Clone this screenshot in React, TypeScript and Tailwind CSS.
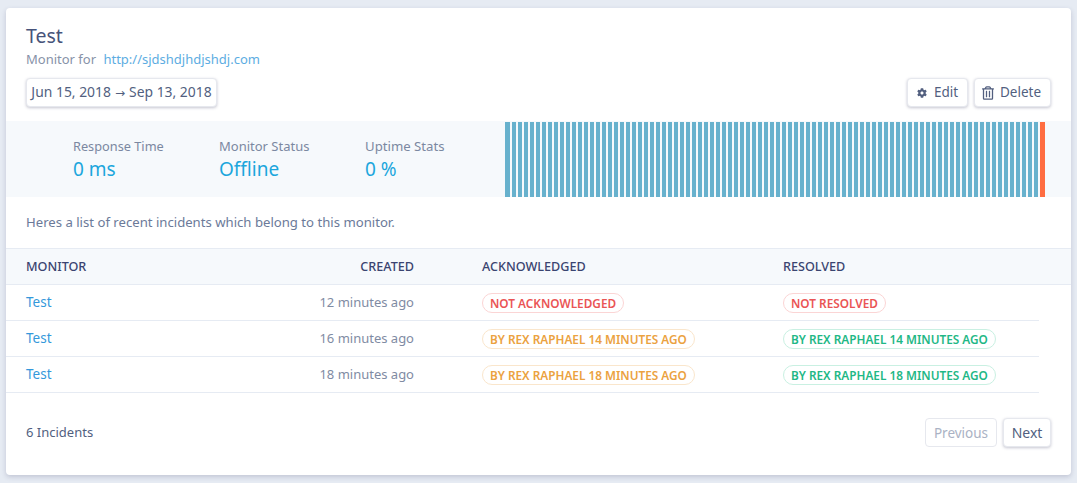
import React from "react";
import { FaCog, FaRegTrashAlt } from "react-icons/fa";

const btn = "inline-flex items-center justify-center h-[29px] rounded-[4px] bg-white border border-[#e6e8ee] shadow-[0_1px_3px_rgba(50,50,93,0.28)] text-[13.5px] text-[#525f7f]";
const red = "text-[#ea5455] border-[#fbd5d5]";
const amber = "text-[#eba23f] border-[#fae6cc]";
const green = "text-[#1fb886] border-[#c9f0e2]";

function Pill({ tone, children }: { tone: string; children: React.ReactNode }) {
  return (
    <span className={`inline-flex items-center h-[20px] px-[7px] rounded-full border text-[11.8px] font-semibold uppercase whitespace-nowrap ${tone}`}>
      {children}
    </span>
  );
}

const rows = [
  { created: "12 minutes ago", ack: "Not acknowledged", ackTone: red, res: "Not resolved", resTone: red },
  { created: "16 minutes ago", ack: "By Rex Raphael 14 minutes ago", ackTone: amber, res: "By Rex Raphael 14 minutes ago", resTone: green },
  { created: "18 minutes ago", ack: "By Rex Raphael 18 minutes ago", ackTone: amber, res: "By Rex Raphael 18 minutes ago", resTone: green },
];

const stats = [
  { label: "Response Time", value: "0 ms", size: "text-[12.75px]" },
  { label: "Monitor Status", value: "Offline", size: "text-[13px]" },
  { label: "Uptime Stats", value: "0 %", size: "text-[13.2px]" },
];

export default function App() {
  return (
    <div className="h-[483px] overflow-hidden bg-[#e6ebf3] pt-[8px] px-[6px] font-['Noto_Sans',sans-serif]">
      <div className="h-[467px] bg-white rounded-[4px] shadow-[0_2px_5px_rgba(50,50,93,0.2)] overflow-hidden">
        <div className="h-[113px] pl-[20px] pr-[20px] pt-[16px]">
          <div className="text-[19.5px] leading-[24px] text-[#47537a]">Test</div>
          <div className="mt-[2px] text-[13px] leading-[18px] text-[#8792a8]">
            Monitor for <a className="ml-[4px] text-[#5dade2]">http://sjdshdjhdjshdj.com</a>
          </div>
          <div className="mt-[10px] flex justify-between items-center">
            <button className={`${btn} w-[191px] !text-[13.9px] gap-[4px]`}>
              <span>Jun 15, 2018</span>
              <span className="font-['DejaVu_Sans',sans-serif] text-[12px]">→</span>
              <span>Sep 13, 2018</span>
            </button>
            <div className="flex gap-[6px]">
              <button className={`${btn} w-[61px] gap-[7px]`}>
                <FaCog className="w-[10px] h-[10px]" />
                <span>Edit</span>
              </button>
              <button className={`${btn} w-[77px] gap-[6px] pr-[2px]`}>
                <FaRegTrashAlt className="w-[12px] h-[14px]" />
                <span>Delete</span>
              </button>
            </div>
          </div>
        </div>

        <div className="h-[76px] bg-[#f6f9fc] flex">
          <div className="w-[499px] flex pl-[67px] pt-[16px]">
            {stats.map((s) => (
              <div key={s.label} className="w-[146px] last:w-[140px]">
                <div className={`${s.size} leading-[18px] text-[#7b88a1]`}>{s.label}</div>
                <div className="mt-[1px] text-[19px] leading-[26px] text-[#1ba6dc]">{s.value}</div>
              </div>
            ))}
          </div>
          <div className="flex gap-[2px] pt-[1px]">
            <div className="w-[5px] h-[75px] bg-[#67b1cd]" />
            {Array.from({ length: 88 }).map((_, i) => (
              <div key={i} className="w-[4px] h-[75px] bg-[#67b1cd]" />
            ))}
            <div className="w-[5px] h-[75px] bg-[#ff6d41]" />
          </div>
        </div>

        <div className="h-[51px] pl-[20px] flex items-center text-[13.15px] text-[#6b7a99]">
          Heres a list of recent incidents which belong to this monitor.
        </div>

        <div className="h-[37px] pt-[1px] flex items-center bg-[#f6f9fc] border-t border-b border-[#e6ebf3] text-[12.6px] font-medium uppercase text-[#3a4470]">
          <div className="w-[408px] pl-[20px] flex justify-between"><span>Monitor</span><span>Created</span></div>
          <div className="ml-[68px] w-[301px]">Acknowledged</div>
          <div>Resolved</div>
        </div>

        {rows.map((r, i) => (
          <div key={i} className="h-[36px] w-[1033px] flex items-center border-b border-[#e6ebf3] text-[13px] leading-[18px]">
            <div className="w-[408px] pl-[20px] pb-[1px] flex justify-between">
              <a className="text-[#3498db] text-[13.5px]">Test</a>
              <span className="text-[#7f8ba3]">{r.created}</span>
            </div>
            <div className="ml-[68px] w-[301px]"><Pill tone={r.ackTone}>{r.ack}</Pill></div>
            <div><Pill tone={r.resTone}>{r.res}</Pill></div>
          </div>
        ))}

        <div className="flex items-center justify-between pl-[20px] pr-[20px] pt-[25px]">
          <span className="text-[13px] text-[#525f7f]">6 Incidents</span>
          <div className="flex gap-[6px]">
            <button className={`${btn} w-[72px] pt-[1px] !shadow-none !text-[#aab2c4]`}>Previous</button>
            <button className={`${btn} w-[48px] !text-[14px]`}>Next</button>
          </div>
        </div>
      </div>
    </div>
  );
}
